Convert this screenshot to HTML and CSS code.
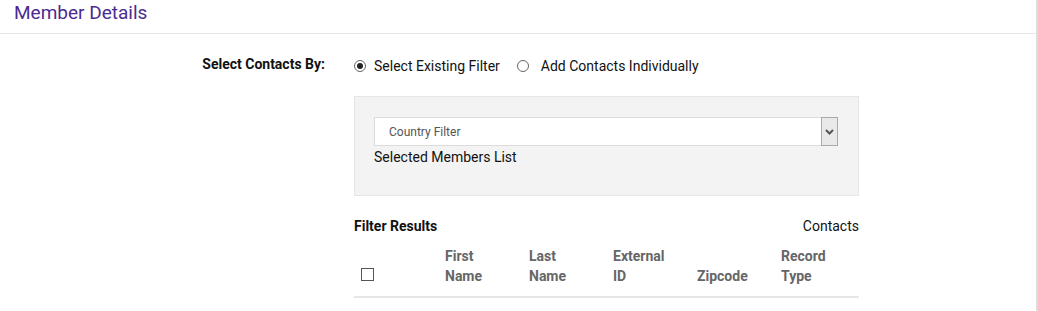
FILE: index.html
```html
<!DOCTYPE html>
<html>
<head>
<meta charset="utf-8">
<link rel="stylesheet" href="styles.css">
</head>
<body>
<div class="page">
  <div class="header"><h1 class="title">Member Details</h1></div>
  <div class="form">
    <div class="label">Select Contacts By:</div>
    <div class="content">
      <div class="radios">
        <label class="radio"><span class="dot checked"></span>Select Existing Filter</label>
        <label class="radio radio-wide"><span class="dot"></span>Add Contacts Individually</label>
      </div>
      <div class="panel">
        <div class="select">
          <span class="select-text">Country Filter</span>
          <span class="select-btn"><svg width="9" height="6" viewBox="0 0 9 6"><path d="M1 1 L4.5 4.5 L8 1" fill="none" stroke="#555" stroke-width="2"/></svg></span>
        </div>
        <div class="members">Selected Members List</div>
      </div>
      <div class="results-head">
        <span class="results-title">Filter Results</span>
        <span class="results-count">Contacts</span>
      </div>
      <div class="table-head">
        <div class="col col-check"><span class="checkbox"></span></div>
        <div class="col">First<br>Name</div>
        <div class="col">Last<br>Name</div>
        <div class="col">External<br>ID</div>
        <div class="col">Zipcode</div>
        <div class="col">Record<br>Type</div>
      </div>
    </div>
  </div>
</div>
</body>
</html>
```

FILE: styles.css
```css
* { box-sizing: border-box; }
html, body { margin: 0; padding: 0; background: #fff; }
body { font-family: Roboto, "Liberation Sans", sans-serif; color: #111; font-size: 14px; }
.page { width: 1038px; height: 311px; border-right: 2px solid #dcdcdc; overflow: hidden; }
.header { height: 34px; border-bottom: 1px solid #e8e8e8; padding: 2px 0 0 14px; }
.title { margin: 0; font-size: 19px; font-weight: 400; color: #4b2b91; line-height: 22px; }
.form { display: grid; grid-template-columns: 325px 505px; column-gap: 29px; padding-top: 22px; }
.label { text-align: right; font-weight: 700; font-size: 14px; line-height: 16px; color: #111; }
.content { display: flex; flex-direction: column; }
.radios { display: flex; align-items: center; gap: 17px; height: 20px; margin-top: 0; }
.radio { display: flex; align-items: center; font-size: 14px; color: #111; }
.dot { width: 12px; height: 12px; border: 1px solid #666; border-radius: 50%; margin-right: 8px; display: flex; align-items: center; justify-content: center; background: #fff; }
.radio-wide .dot { margin-right: 12px; }
.dot.checked::after { content: ""; width: 6px; height: 6px; border-radius: 50%; background: #222; }
.panel { margin-top: 20px; height: 100px; background: #f3f3f3; border: 1px solid #e6e6e6; padding: 20px 20px 0 19px; }
.select { display: flex; height: 29px; background: #fff; border: 1px solid #dcdcdc; align-items: stretch; }
.select-text { flex: 1; padding-left: 14px; font-size: 12px; color: #555; display: flex; align-items: center; }
.select-btn { width: 17px; margin: -1px -1px -1px 0; background: #e9e9e9; border: 1px solid #a9a9a9; display: flex; align-items: center; justify-content: center; }
.members { font-size: 14px; line-height: 20px; color: #111; margin-top: 1px; }
.results-head { display: flex; justify-content: space-between; margin-top: 20px; line-height: 20px; font-size: 14px; }
.results-title { font-weight: 700; }
.table-head { display: grid; grid-template-columns: 91px 84px 84px 84px 84px 77px; border-bottom: 2px solid #e6e6e6; padding-bottom: 10px; margin-top: 10px; }
.col { font-weight: 700; color: #666; font-size: 14px; line-height: 20px; display: flex; align-items: flex-end; }
.col-check { padding-left: 7px; padding-bottom: 5px; }
.checkbox { width: 13px; height: 13px; border: 1px solid #555; background: #fff; }
```
